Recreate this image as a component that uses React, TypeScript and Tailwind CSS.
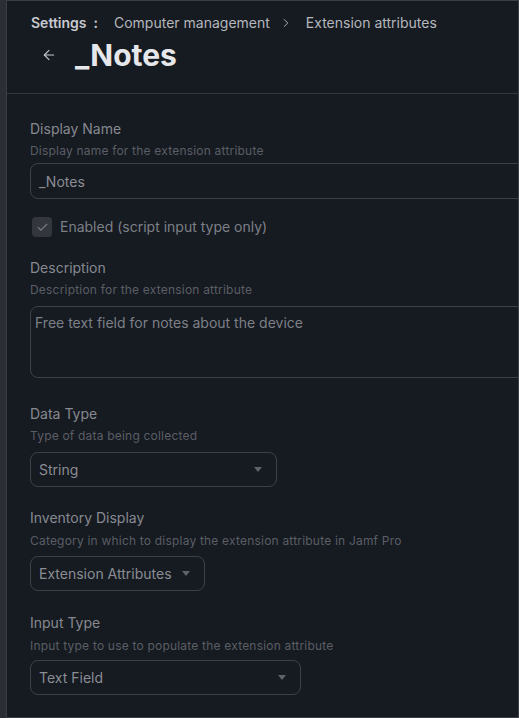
import { ArrowLeft, ChevronRight, Check } from "lucide-react"

const fields = [
    { label: 'Data Type', desc: 'Type of data being collected', value: 'String', width: 'w-[247px]', gap: 'mt-[26px]', descGap: 'mt-[4px]', boxGap: 'mt-[8px]' },
    { label: 'Inventory Display', desc: 'Category in which to display the extension attribute in Jamf Pro', value: 'Extension Attributes', width: 'w-[175px]', gap: 'mt-[21px]', descGap: 'mt-[5px]', boxGap: 'mt-[7px]' },
    { label: 'Input Type', desc: 'Input type to use to populate the extension attribute', value: 'Text Field', width: 'w-[271px]', gap: 'mt-[22px]', descGap: 'mt-[5px]', boxGap: 'mt-[6px]' },
]

function Caret() {
    return (
        <svg width="8" height="5" viewBox="0 0 8 5" className="shrink-0">
            <path d="M0 0 L8 0 L4 5 Z" fill="#5f636b" />
        </svg>
    )
}

export default function App() {
    return (
        <div className="w-[519px] h-[718px] bg-[#2b2e34] pl-[6px] font-['Inter',sans-serif]">
            <div className="h-full border border-[#3b3e45] bg-[#161a21] overflow-hidden">
                {/* header */}
                <div className="border-b border-[#33363d] h-[93px] px-[24px] pt-[12px]">
                    <div className="flex items-center text-[14px] leading-[20px]">
                        <span className="font-semibold text-[#c8cad0]">Settings</span>
                        <span className="font-semibold text-[#c8cad0] ml-[7px]">:</span>
                        <span className="text-[#b4b7bd] ml-[16px]">Computer management</span>
                        <ChevronRight size={14} strokeWidth={1.6} className="text-[#b4b7bd] ml-[9px]" />
                        <span className="text-[#b4b7bd] ml-[13px]">Extension attributes</span>
                    </div>
                    <div className="flex items-center mt-[4px] pl-[10px]">
                        <ArrowLeft size={16} strokeWidth={1.6} className="text-[#c8cad0]" />
                        <h1 className="ml-[18px] text-[30px] leading-[36px] font-bold text-[#e6e7ea]">_Notes</h1>
                    </div>
                </div>

                {/* form */}
                <div className="pl-[23px] pt-[25px]">
                    <div className="text-[14px] leading-[20px] text-[#868990]">Display Name</div>
                    <div className="text-[12px] leading-[16px] text-[#5b5e65] mt-[4px] tracking-[0.2px]">Display name for the extension attribute</div>
                    <div className="mt-[4px] w-[520px] h-[36px] border border-[#3d4048] rounded-[8px] flex items-center px-[8px] text-[14px] text-[#8a8d93]">_Notes</div>

                    <div className="flex items-center mt-[18px] pl-[2px]">
                        <div className="w-[20px] h-[20px] rounded-[4px] bg-[#33363d] flex items-center justify-center">
                            <Check size={13} strokeWidth={2} className="text-[#7b7e85]" />
                        </div>
                        <span className="ml-[8px] text-[14px] leading-[20px] text-[#7d8087]">Enabled (script input type only)</span>
                    </div>

                    <div className="text-[14px] leading-[20px] text-[#868990] mt-[21px]">Description</div>
                    <div className="text-[12px] leading-[16px] text-[#5b5e65] mt-[4px] tracking-[0.2px]">Description for the extension attribute</div>
                    <div className="mt-[8px] w-[520px] h-[72px] border border-[#3d4048] rounded-[8px] px-[4px] pt-[6px] text-[14px] leading-[20px] text-[#7d8087]">Free text field for notes about the device</div>

                    {fields.map((item, index) => (
                        <div key={index} className={item.gap}>
                            <div className="text-[14px] leading-[20px] text-[#868990]">{item.label}</div>
                            <div className={`${item.descGap} text-[12px] leading-[16px] text-[#5b5e65] tracking-[0.2px]`}>{item.desc}</div>
                            <div className={`${item.boxGap} ${item.width} h-[35px] border border-[#3d4048] rounded-[8px] flex items-center justify-between pl-[8px] pr-[14px] text-[14px] text-[#8a8d93]`}>
                                <span>{item.value}</span>
                                <Caret />
                            </div>
                        </div>
                    ))}
                </div>
            </div>
        </div>
    )
}
